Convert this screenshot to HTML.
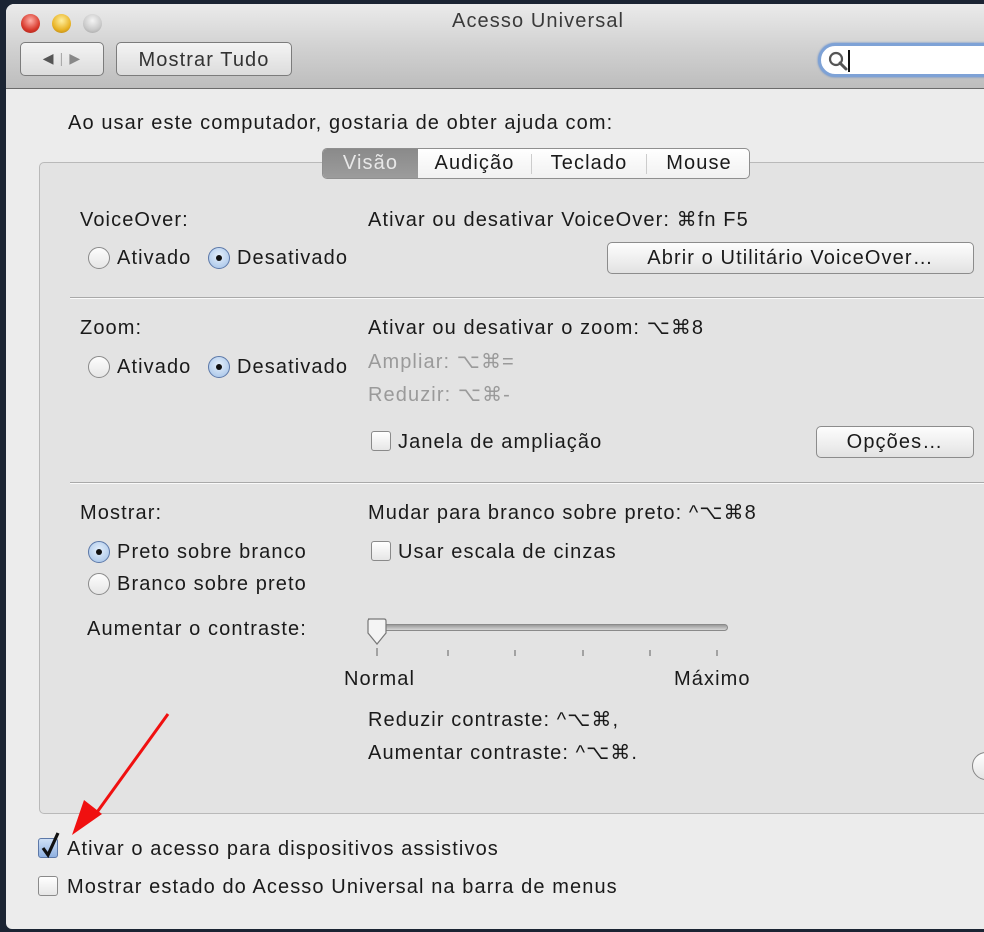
<!DOCTYPE html>
<html><head><meta charset="utf-8"><style>
*{margin:0;padding:0;box-sizing:border-box}
body{width:984px;height:932px;overflow:hidden;background:#1b2433;position:relative;font-family:"Liberation Sans",sans-serif;font-size:20px;letter-spacing:1.1px;color:#1a1a1a}
.a{position:absolute;white-space:nowrap;line-height:22px}
#win{position:absolute;left:6px;top:4px;width:990px;height:925px;background:#ececec;border-radius:8px 0 0 6px;overflow:hidden}
#tb{position:absolute;left:0;top:0;width:100%;height:85px;background:linear-gradient(#ebebeb,#d2d2d2 50%,#bdbdbd);border-bottom:1px solid #6b6b6b}
.btn{position:absolute;border:1px solid #8c8c8c;border-radius:5px;background:linear-gradient(#fdfdfd,#f0f0f0 50%,#e2e2e2);text-align:center;line-height:30px;color:#1a1a1a;white-space:nowrap}
.tbtn{background:linear-gradient(#f4f4f4,#dcdcdc);border-color:#7c7c7c;color:#333}
.tl{position:absolute;top:10px;width:19px;height:19px;border-radius:50%}
.r{position:absolute;width:22px;height:22px;border-radius:50%;border:1px solid #8a8a8a;background:linear-gradient(#fdfdfd,#e6e6e6)}
.r.on{border-color:#5c78a8;background:radial-gradient(circle at 50% 40%,#e6f0fb,#9fbfe6)}
.r.on:after{content:"";position:absolute;left:7px;top:7px;width:6px;height:6px;border-radius:50%;background:#111}
.cb{position:absolute;width:20px;height:20px;border-radius:3px;border:1px solid #8a8a8a;background:linear-gradient(#fff,#e6e6e6)}
.sep{position:absolute;left:70px;width:920px;height:2px;background:#a9a9a9;border-bottom:1px solid #fafafa}
.g{color:#9a9a9a}
</style></head><body>
<div id="win">
<div id="tb">
<div class="tl" style="left:15px;background:radial-gradient(circle at 50% 35%,#ffb0a8,#d8392c 60%,#9b1c12)"></div>
<div class="tl" style="left:46px;background:radial-gradient(circle at 50% 35%,#fff0a0,#e9b325 60%,#a7740c)"></div>
<div class="tl" style="left:77px;background:radial-gradient(circle at 50% 35%,#f4f4f4,#c9c9c9 60%,#9a9a9a)"></div>
<div class="a" style="left:446px;top:6px;color:#3a3a3a">Acesso Universal</div>
<div class="btn tbtn" style="left:14px;top:38px;width:84px;height:34px;font-size:14px;color:#555">◀ <span style="color:#aaa">|</span> <span style="color:#888">▶</span></div>
<div class="btn tbtn" style="left:110px;top:38px;width:176px;height:34px;line-height:34px">Mostrar Tudo</div>
<div style="position:absolute;left:812px;top:39px;width:200px;height:34px;border-radius:17px;border:3px solid #7ea2d6;background:#fff;box-shadow:0 0 2px #5a86c8"></div>
<svg style="position:absolute;left:821px;top:46px" width="22" height="22"><circle cx="9" cy="9" r="6" fill="none" stroke="#555" stroke-width="2.2"/><line x1="13" y1="13" x2="19" y2="19" stroke="#555" stroke-width="3" stroke-linecap="round"/></svg>
<div style="position:absolute;left:842px;top:46px;width:2px;height:22px;background:#111"></div>
</div>
<div class="a" style="left:62px;top:108px">Ao usar este computador, gostaria de obter ajuda com:</div>
<div style="position:absolute;left:33px;top:158px;width:980px;height:652px;border:1px solid #b9b9b9;border-radius:5px;background:#e3e3e3"></div>
<div style="position:absolute;left:316px;top:144px;width:428px;height:31px;border:1px solid #8f8f8f;border-radius:5px;background:linear-gradient(#fff,#f1f1f1);overflow:hidden">
<div style="position:absolute;left:0;top:0;width:95px;height:31px;background:linear-gradient(#8a8a8a,#9d9d9d);color:#e8e8e8;text-align:center;line-height:29px">Visão</div>
<div style="position:absolute;left:95px;top:0;width:113px;text-align:center;line-height:29px">Audição</div>
<div style="position:absolute;left:208px;top:5px;width:1px;height:20px;background:#ccc"></div>
<div style="position:absolute;left:209px;top:0;width:114px;text-align:center;line-height:29px">Teclado</div>
<div style="position:absolute;left:323px;top:5px;width:1px;height:20px;background:#ccc"></div>
<div style="position:absolute;left:324px;top:0;width:104px;text-align:center;line-height:29px">Mouse</div>
</div>

<div class="a" style="left:74px;top:205px">VoiceOver:</div>
<div class="r" style="left:82px;top:243px"></div><div class="a" style="left:111px;top:243px">Ativado</div>
<div class="r on" style="left:202px;top:243px"></div><div class="a" style="left:231px;top:243px">Desativado</div>
<div class="a" style="left:362px;top:205px">Ativar ou desativar VoiceOver: ⌘fn F5</div>
<div class="btn" style="left:601px;top:238px;width:367px;height:32px">Abrir o Utilitário VoiceOver…</div>
<div class="sep" style="left:64px;top:293px"></div>

<div class="a" style="left:74px;top:313px">Zoom:</div>
<div class="r" style="left:82px;top:352px"></div><div class="a" style="left:111px;top:352px">Ativado</div>
<div class="r on" style="left:202px;top:352px"></div><div class="a" style="left:231px;top:352px">Desativado</div>
<div class="a" style="left:362px;top:313px">Ativar ou desativar o zoom: ⌥⌘8</div>
<div class="a g" style="left:362px;top:347px">Ampliar: ⌥⌘=</div>
<div class="a g" style="left:362px;top:380px">Reduzir: ⌥⌘-</div>
<div class="cb" style="left:365px;top:427px"></div><div class="a" style="left:392px;top:427px">Janela de ampliação</div>
<div class="btn" style="left:810px;top:422px;width:158px;height:32px">Opções…</div>
<div class="sep" style="left:64px;top:478px"></div>

<div class="a" style="left:74px;top:498px">Mostrar:</div>
<div class="a" style="left:362px;top:498px">Mudar para branco sobre preto: ^⌥⌘8</div>
<div class="r on" style="left:82px;top:537px"></div><div class="a" style="left:111px;top:537px">Preto sobre branco</div>
<div class="r" style="left:82px;top:569px"></div><div class="a" style="left:111px;top:569px">Branco sobre preto</div>
<div class="cb" style="left:365px;top:537px"></div><div class="a" style="left:392px;top:537px">Usar escala de cinzas</div>
<div class="a" style="left:81px;top:614px">Aumentar o contraste:</div>
<div style="position:absolute;left:368px;top:620px;width:354px;height:7px;border-radius:4px;background:linear-gradient(#9a9a9a,#d6d6d6);border:1px solid #8a8a8a"></div>
<svg style="position:absolute;left:356px;top:612px" width="360" height="50">
<path d="M6 3 H22 Q24 3 24 5 V17 L15 28 L6 17 V5 Q6 3 8 3Z" fill="#f4f4f4" stroke="#777" stroke-width="1.2"/>
<g stroke="#777" stroke-width="1.2"><line x1="15" y1="32" x2="15" y2="40"/><line x1="86" y1="34" x2="86" y2="40"/><line x1="153" y1="34" x2="153" y2="40"/><line x1="221" y1="34" x2="221" y2="40"/><line x1="288" y1="34" x2="288" y2="40"/><line x1="355" y1="34" x2="355" y2="40"/></g></svg>
<div class="a" style="left:338px;top:664px">Normal</div>
<div class="a" style="left:668px;top:664px">Máximo</div>
<div class="a" style="left:362px;top:705px">Reduzir contraste: ^⌥⌘,</div>
<div class="a" style="left:362px;top:738px">Aumentar contraste: ^⌥⌘.</div>
<div style="position:absolute;left:966px;top:748px;width:28px;height:28px;border-radius:50%;border:1px solid #888;background:linear-gradient(#fff,#e4e4e4)"></div>

<div class="cb" style="left:32px;top:834px;background:linear-gradient(#cfe0f6,#8fb0e0);border-color:#5c78a8"></div>
<svg style="position:absolute;left:33px;top:826px" width="22" height="30"><path d="M4 18 L9 25 L19 3" fill="none" stroke="#111" stroke-width="3.2"/></svg>
<div class="a" style="left:61px;top:834px">Ativar o acesso para dispositivos assistivos</div>
<div class="cb" style="left:32px;top:872px"></div>
<div class="a" style="left:61px;top:872px">Mostrar estado do Acesso Universal na barra de menus</div>
</div>
<svg style="position:absolute;left:0;top:0" width="984" height="932"><line x1="168" y1="714" x2="95" y2="815" stroke="#f01010" stroke-width="3"/><path d="M72 835 L84 800 L102 814Z" fill="#f01010"/></svg>
</body></html>
